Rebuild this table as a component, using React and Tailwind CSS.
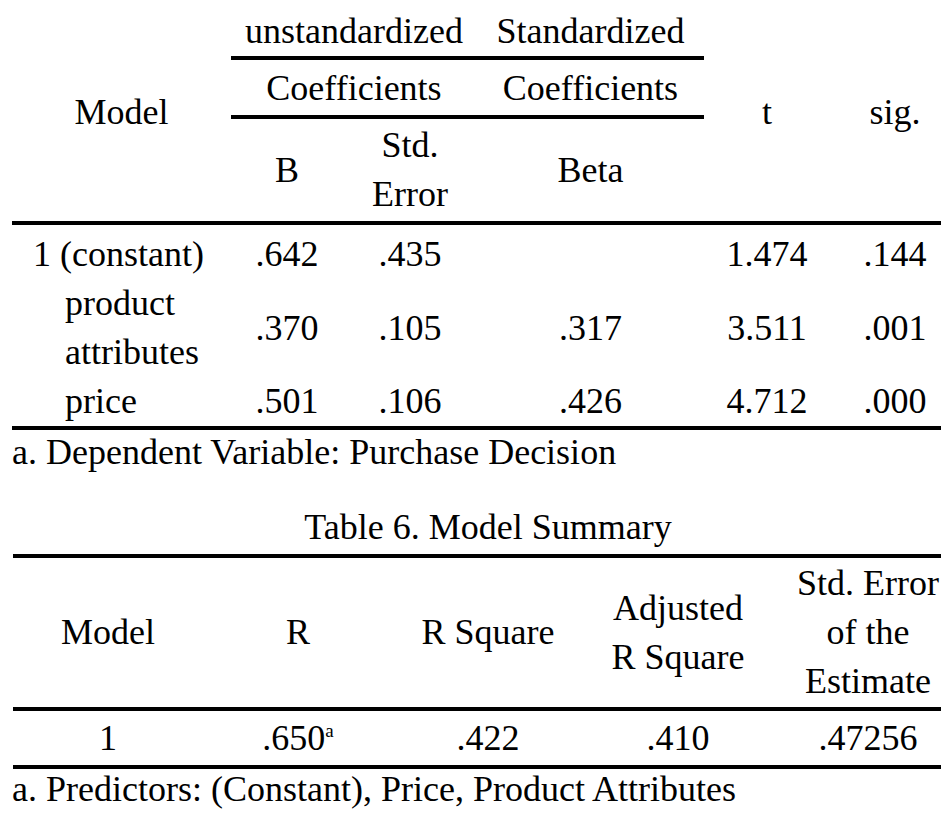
import React from "react";

const cols = "grid grid-cols-[219px_112px_134px_227px_126px_130px]";

function Cell({ children, className = "" }) {
  return (
    <div className={"flex items-center justify-center text-center " + className}>
      {children}
    </div>
  );
}

export default function App() {
  return (
    <div className="w-[946px] h-[823px] bg-white text-black font-['Liberation_Serif','Times_New_Roman',serif] text-[36px] leading-[49px] overflow-hidden">
      <div className="w-[941px] overflow-hidden">
        {/* Coefficients table */}
        <div className="ml-[12px] w-[948px]">
          <div className={cols + " grid-rows-[60px_59px_102px] border-b-4 border-black"}>
            <Cell className="row-span-3 pt-[3px]">Model</Cell>
            <div className="col-span-2 border-b-4 border-black pt-[7px] text-center">unstandardized</div>
            <div className="border-b-4 border-black pt-[7px] text-center">Standardized</div>
            <Cell className="row-span-3 pt-[3px]">t</Cell>
            <Cell className="row-span-3 pt-[3px]">sig.</Cell>
            <div className="col-span-2 border-b-4 border-black pt-[4px] text-center">Coefficients</div>
            <div className="border-b-4 border-black pt-[4px] text-center">Coefficients</div>
            <Cell>B</Cell>
            <Cell>
              <span>
                Std.
                <br />
                Error
              </span>
            </Cell>
            <Cell>Beta</Cell>
          </div>
          <div className="border-b-4 border-black pt-[5px]">
            <div className={cols}>
              <div className="pl-[21px]">1 (constant)</div>
              <Cell>.642</Cell>
              <Cell>.435</Cell>
              <Cell></Cell>
              <Cell>1.474</Cell>
              <Cell>.144</Cell>
            </div>
            <div className={cols}>
              <div className="pl-[53px]">
                product
                <br />
                attributes
              </div>
              <Cell>.370</Cell>
              <Cell>.105</Cell>
              <Cell>.317</Cell>
              <Cell>3.511</Cell>
              <Cell>.001</Cell>
            </div>
            <div className={cols}>
              <div className="pl-[53px]">price</div>
              <Cell>.501</Cell>
              <Cell>.106</Cell>
              <Cell>.426</Cell>
              <Cell>4.712</Cell>
              <Cell>.000</Cell>
            </div>
          </div>
        </div>
        <div className="ml-[12px] pt-[2px] leading-[40px] whitespace-nowrap">
          a. Dependent Variable: Purchase Decision
        </div>

        {/* Model summary */}
        <div className="ml-[13px] w-[950px] mt-[35px]">
          <div className="text-center leading-[40px]">Table 6. Model Summary</div>
          <div className="mt-[7px] border-t-4 border-black">
            <div className="grid grid-cols-[repeat(5,190px)] h-[153px] border-b-4 border-black">
              <Cell>Model</Cell>
              <Cell>R</Cell>
              <Cell>R Square</Cell>
              <Cell>
                <span>
                  Adjusted
                  <br />
                  R Square
                </span>
              </Cell>
              <Cell>
                <span className="whitespace-nowrap">
                  Std. Error
                  <br />
                  of the
                  <br />
                  Estimate
                </span>
              </Cell>
            </div>
            <div className="grid grid-cols-[repeat(5,190px)] h-[58px] border-b-4 border-black">
              <Cell>1</Cell>
              <Cell>
                <span>
                  .650<span className="text-[19px] leading-none align-[13px]">a</span>
                </span>
              </Cell>
              <Cell>.422</Cell>
              <Cell>.410</Cell>
              <Cell>.47256</Cell>
            </div>
          </div>
        </div>
        <div className="ml-[12px] leading-[40px] whitespace-nowrap">
          a. Predictors: (Constant), Price, Product Attributes
        </div>
      </div>
    </div>
  );
}
